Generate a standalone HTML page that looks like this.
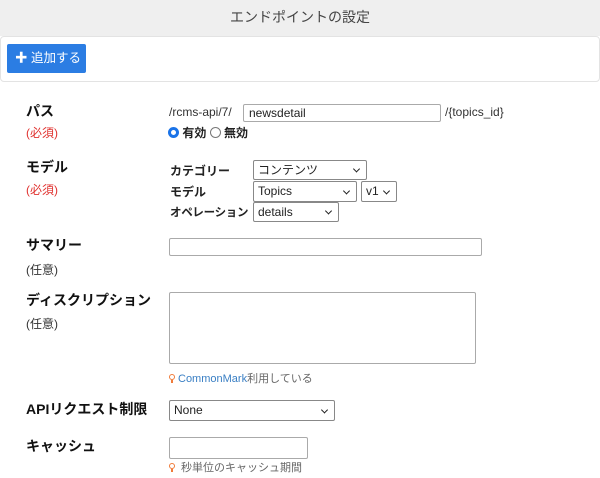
<!DOCTYPE html>
<html><head><meta charset="utf-8"><style>
*{box-sizing:border-box;margin:0;padding:0}
body{width:600px;height:478px;background:#fff;font-family:"Liberation Sans","Noto Sans CJK JP",sans-serif;color:#222;position:relative;overflow:hidden}
.a{position:absolute;white-space:nowrap}
.hd{left:0;top:0;width:600px;height:36px;background:#efefef;text-align:center;line-height:34px;font-size:14px;color:#444}
.pn{left:0;top:36px;width:600px;height:46px;border:1px solid #e3e3e3;border-radius:4px;background:#fff}
.btn{left:7px;top:44px;width:79px;height:29px;background:#2b7de3;border-radius:2px;color:#fff;font-size:12.5px;line-height:29px;padding-left:8px}
.lb{font-size:14px;font-weight:bold;color:#111}
.req{font-size:12px;color:#e0322f}
.opt{font-size:12px;color:#333}
.in{border:1px solid #aaa;border-radius:2px;background:#fff;font-size:12px;line-height:16px;padding-left:5px;color:#222}
.sel{border:1px solid #888;border-radius:2px;background:#fff;font-size:12px;padding-left:4px;color:#222}
.sel:after{content:"";position:absolute;right:7px;top:50%;width:4px;height:4px;border-right:1.5px solid #222;border-bottom:1.5px solid #222;transform:translateY(-70%) rotate(45deg)}
.sm{font-size:12px}
.hint{font-size:11px;color:#666}
.bulb{display:inline-block;width:6px;height:6px;border:1.5px solid #f07b3a;border-radius:50%;margin-right:3px;position:relative;top:-2px}
.bulb:after{content:"";position:absolute;left:0.5px;top:5px;width:2px;height:3px;background:#f07b3a}
</style></head><body>
<div class="a hd">エンドポイントの設定</div>
<div class="a pn"></div>
<div class="a btn"><b>✚</b> 追加する</div>

<div class="a lb" style="left:26px;top:101px">パス</div>
<div class="a req" style="left:26px;top:124px">(必須)</div>
<div class="a sm" style="left:169px;top:105px;color:#333">/rcms-api/7/</div>
<div class="a in" style="left:243px;top:104px;width:198px;height:18px">newsdetail</div>
<div class="a sm" style="left:445px;top:105px;color:#333">/{topics_id}</div>
<div class="a sm" style="left:168px;top:124px;font-weight:bold"><span style="display:inline-block;width:11px;height:11px;border-radius:50%;border:3px solid #1a73e8;vertical-align:-1px"></span> 有効 <span style="display:inline-block;width:11px;height:11px;border-radius:50%;border:1px solid #777;vertical-align:-1px"></span> 無効</div>

<div class="a lb" style="left:26px;top:157px">モデル</div>
<div class="a req" style="left:26px;top:181px">(必須)</div>
<div class="a sm" style="left:170px;top:162px;font-weight:bold">カテゴリー</div>
<div class="a sel" style="left:253px;top:160px;width:114px;height:20px;line-height:18px">コンテンツ</div>
<div class="a sm" style="left:170px;top:183px;font-weight:bold">モデル</div>
<div class="a sel" style="left:253px;top:181px;width:104px;height:21px;line-height:19px">Topics</div>
<div class="a sel" style="left:361px;top:181px;width:36px;height:21px;line-height:19px">v1</div>
<div class="a" style="left:170px;top:204px;font-weight:bold;font-size:11.5px;letter-spacing:-0.3px">オペレーション</div>
<div class="a sel" style="left:253px;top:202px;width:86px;height:20px;line-height:18px">details</div>

<div class="a lb" style="left:26px;top:235px">サマリー</div>
<div class="a opt" style="left:26px;top:261px">(任意)</div>
<div class="a in" style="left:169px;top:238px;width:313px;height:18px"></div>

<div class="a lb" style="left:26px;top:290px">ディスクリプション</div>
<div class="a opt" style="left:26px;top:315px">(任意)</div>
<div class="a in" style="left:169px;top:292px;width:307px;height:72px"></div>
<div class="a hint" style="left:169px;top:370px"><span class="bulb"></span><span style="color:#3a7fc4">CommonMark</span>利用している</div>

<div class="a lb" style="left:26px;top:399px">APIリクエスト制限</div>
<div class="a sel" style="left:169px;top:400px;width:166px;height:21px;line-height:19px">None</div>

<div class="a lb" style="left:26px;top:436px">キャッシュ</div>
<div class="a in" style="left:169px;top:437px;width:139px;height:22px"></div>
<div class="a hint" style="left:169px;top:459px"><span class="bulb"></span> 秒単位のキャッシュ期間</div>
</body></html>
